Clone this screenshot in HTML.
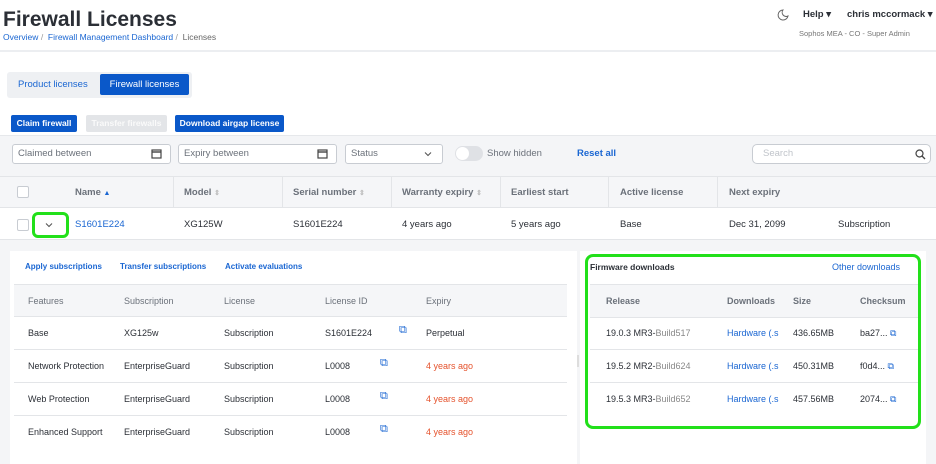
<!DOCTYPE html>
<html><head><style>
*{box-sizing:border-box;margin:0;padding:0}
body{width:936px;height:464px;overflow:hidden;background:#fff;font-family:"Liberation Sans",sans-serif;position:relative;color:#2b2f36}
.a{position:absolute;white-space:nowrap}
.blue{color:#1a66d2}
.btn{position:absolute;height:17px;border-radius:2px;background:#0a58c9;color:#fff;font-size:8.5px;font-weight:bold;text-align:center;line-height:17px}
.inp{position:absolute;top:144px;height:20px;background:#fff;border:1px solid #c8ccd2;border-radius:3px;font-size:9.5px;color:#6b717a;padding-left:5px;line-height:18px}
.th{font-size:9.5px;font-weight:bold;color:#6b717a}
.td{font-size:9.5px;color:#2b2f36}
.s{font-size:9px}
.cb{position:absolute;width:12px;height:12px;border:1px solid #c8ccd2;border-radius:2px;background:#fff}
.td.red{color:#e5532d}
.td.lk{color:#1a66d2}
</style></head><body>
<div class="a" style="left:3px;top:8px;font-size:21px;font-weight:bold;color:#2b2f36">Firewall Licenses</div>
<div class="a" style="left:3px;top:32px;font-size:8.5px"><span class="blue">Overview</span> <span style="color:#999">/</span>&nbsp; <span class="blue">Firewall Management Dashboard</span> <span style="color:#999">/</span>&nbsp; <span style="color:#666">Licenses</span></div>
<svg class="a" style="left:777px;top:9px" width="12" height="12" viewBox="0 0 12 12"><path d="M6 1A5 5 0 1 0 11 7 4 4 0 0 1 6 1z" fill="none" stroke="#666" stroke-width="1"/></svg>
<div class="a" style="left:803px;top:9px;font-size:9.5px;font-weight:bold">Help ▾</div>
<div class="a" style="left:847px;top:9px;font-size:9.5px;font-weight:bold">chris mccormack ▾</div>
<div class="a" style="left:799px;top:29px;font-size:7.5px;color:#777">Sophos MEA - CO - Super Admin</div>
<div class="a" style="left:0;top:50px;width:936px;height:2px;background:#eceef1"></div>
<div class="a" style="left:7px;top:72px;width:185px;height:26px;background:#eef0f3;border-radius:3px"></div>
<div class="a blue" style="left:18px;top:79px;font-size:9.5px">Product licenses</div>
<div class="a" style="left:100px;top:74px;width:89px;height:21px;background:#0a58c9;border-radius:2px;color:#fff;font-size:9.5px;text-align:center;line-height:21px">Firewall licenses</div>
<div class="btn" style="left:11px;top:115px;width:66px">Claim firewall</div>
<div class="btn" style="left:86px;top:115px;width:81px;background:#e3e5e8;color:#fafafa">Transfer firewalls</div>
<div class="btn" style="left:175px;top:115px;width:109px">Download airgap license</div>
<div class="a" style="left:0;top:135px;width:936px;height:329px;background:#f4f5f7;border-top:1px solid #e6e8eb"></div>
<div class="inp" style="left:12px;width:159px">Claimed between</div>
<div class="inp" style="left:178px;width:159px">Expiry between</div>
<svg class="a" style="left:151px;top:148px" width="11" height="11"><rect x="1" y="2" width="9" height="8" fill="none" stroke="#444" stroke-width="1.2"/><line x1="1" y1="4" x2="10" y2="4" stroke="#444" stroke-width="1.4"/></svg>
<svg class="a" style="left:317px;top:148px" width="11" height="11"><rect x="1" y="2" width="9" height="8" fill="none" stroke="#444" stroke-width="1.2"/><line x1="1" y1="4" x2="10" y2="4" stroke="#444" stroke-width="1.4"/></svg>
<div class="inp" style="left:345px;width:98px">Status</div>
<svg class="a" style="left:424px;top:151px" width="8" height="6"><path d="M1 1.5L4 4.5 7 1.5" fill="none" stroke="#555" stroke-width="1.1"/></svg>
<div class="a" style="left:455px;top:146px;width:28px;height:15px;border-radius:8px;background:#dfe1e5"></div>
<div class="a" style="left:456px;top:147px;width:13px;height:13px;border-radius:7px;background:#fff"></div>
<div class="a" style="left:487px;top:148px;font-size:9.5px;color:#6b717a">Show hidden</div>
<div class="a blue" style="left:577px;top:148px;font-size:9.5px;font-weight:bold">Reset all</div>
<div class="inp" style="left:752px;width:179px;border-radius:5px;color:#c0c4ca;padding-left:10px">Search<svg style="position:absolute;right:4px;top:4px" width="11" height="11"><circle cx="4.5" cy="4.5" r="3.5" fill="none" stroke="#444" stroke-width="1.2"/><line x1="7" y1="7" x2="10" y2="10" stroke="#444" stroke-width="1.3"/></svg></div>
<div class="a" style="left:0;top:176px;width:936px;height:32px;background:#f5f6f8;border-top:1px solid #e3e5e8;border-bottom:1px solid #e3e5e8"></div>
<div class="a" style="left:0;top:208px;width:936px;height:32px;background:#fff;border-bottom:1px solid #e3e5e8"></div>
<div class="a" style="left:173px;top:177px;width:1px;height:30px;background:#e3e5e8"></div>
<div class="a" style="left:282px;top:177px;width:1px;height:30px;background:#e3e5e8"></div>
<div class="a" style="left:391px;top:177px;width:1px;height:30px;background:#e3e5e8"></div>
<div class="a" style="left:500px;top:177px;width:1px;height:30px;background:#e3e5e8"></div>
<div class="a" style="left:608px;top:177px;width:1px;height:30px;background:#e3e5e8"></div>
<div class="a" style="left:717px;top:177px;width:1px;height:30px;background:#e3e5e8"></div>
<div class="cb" style="left:17px;top:186px"></div>
<div class="a th" style="left:75px;top:187px">Name <span style="color:#1a66d2;font-size:7px">▲</span></div>
<div class="a th" style="left:184px;top:187px">Model <span style="color:#bbb;font-size:7px">⇕</span></div>
<div class="a th" style="left:293px;top:187px">Serial number <span style="color:#bbb;font-size:7px">⇕</span></div>
<div class="a th" style="left:402px;top:187px">Warranty expiry <span style="color:#bbb;font-size:7px">⇕</span></div>
<div class="a th" style="left:511px;top:187px">Earliest start</div>
<div class="a th" style="left:620px;top:187px">Active license</div>
<div class="a th" style="left:729px;top:187px">Next expiry</div>
<div class="cb" style="left:17px;top:219px"></div>
<div class="a" style="left:32px;top:212px;width:37px;height:26px;border:3px solid #22e01a;border-radius:6px"></div>
<svg class="a" style="left:45px;top:222px" width="8" height="6"><path d="M1 1.5L4 4.5 7 1.5" fill="none" stroke="#555" stroke-width="1.1"/></svg>
<div class="a td lk" style="left:75px;top:219px">S1601E224</div>
<div class="a td" style="left:184px;top:219px">XG125W</div>
<div class="a td" style="left:293px;top:219px">S1601E224</div>
<div class="a td" style="left:402px;top:219px">4 years ago</div>
<div class="a td" style="left:511px;top:219px">5 years ago</div>
<div class="a td" style="left:620px;top:219px">Base</div>
<div class="a td" style="left:729px;top:219px">Dec 31, 2099</div>
<div class="a td" style="left:838px;top:219px">Subscription</div>

<div class="a" style="left:10px;top:251px;width:567px;height:213px;background:#fff"></div>
<div class="a blue" style="left:25px;top:262px;font-size:8px;font-weight:bold">Apply subscriptions</div>
<div class="a blue" style="left:120px;top:262px;font-size:8px;font-weight:bold">Transfer subscriptions</div>
<div class="a blue" style="left:225px;top:262px;font-size:8px;font-weight:bold">Activate evaluations</div>
<div class="a" style="left:14px;top:284px;width:553px;height:33px;background:#f5f6f8;border-top:1px solid #e3e5e8;border-bottom:1px solid #e3e5e8"></div>
<div class="a th s" style="left:28px;top:296px;font-weight:normal">Features</div>
<div class="a th s" style="left:124px;top:296px;font-weight:normal">Subscription</div>
<div class="a th s" style="left:224px;top:296px;font-weight:normal">License</div>
<div class="a th s" style="left:325px;top:296px;font-weight:normal">License ID</div>
<div class="a th s" style="left:426px;top:296px;font-weight:normal">Expiry</div>
<div class="a" style="left:14px;top:349px;width:553px;height:1px;background:#e3e5e8"></div>
<div class="a" style="left:14px;top:382px;width:553px;height:1px;background:#e3e5e8"></div>
<div class="a" style="left:14px;top:415px;width:553px;height:1px;background:#e3e5e8"></div>
<div class="a" style="left:577px;top:355px;width:2px;height:12px;background:#ddd"></div>

<div class="a td s" style="left:28px;top:328px">Base</div><div class="a td s" style="left:124px;top:328px">XG125w</div><div class="a td s" style="left:224px;top:328px">Subscription</div><div class="a td s" style="left:325px;top:328px">S1601E224</div><div class="a blue" style="left:399px;top:324px;font-size:11px">⧉</div><div class="a td s" style="left:426px;top:328px">Perpetual</div>
<div class="a td s" style="left:28px;top:361px">Network Protection</div><div class="a td s" style="left:124px;top:361px">EnterpriseGuard</div><div class="a td s" style="left:224px;top:361px">Subscription</div><div class="a td s" style="left:325px;top:361px">L0008</div><div class="a blue" style="left:380px;top:357px;font-size:11px">⧉</div><div class="a td s red" style="left:426px;top:361px">4 years ago</div>
<div class="a td s" style="left:28px;top:394px">Web Protection</div><div class="a td s" style="left:124px;top:394px">EnterpriseGuard</div><div class="a td s" style="left:224px;top:394px">Subscription</div><div class="a td s" style="left:325px;top:394px">L0008</div><div class="a blue" style="left:380px;top:390px;font-size:11px">⧉</div><div class="a td s red" style="left:426px;top:394px">4 years ago</div>
<div class="a td s" style="left:28px;top:427px">Enhanced Support</div><div class="a td s" style="left:124px;top:427px">EnterpriseGuard</div><div class="a td s" style="left:224px;top:427px">Subscription</div><div class="a td s" style="left:325px;top:427px">L0008</div><div class="a blue" style="left:380px;top:423px;font-size:11px">⧉</div><div class="a td s red" style="left:426px;top:427px">4 years ago</div>

<div class="a" style="left:580px;top:251px;width:346px;height:213px;background:#fff"></div>
<div class="a" style="left:585px;top:254px;width:336px;height:175px;border:3px solid #22e01a;border-radius:8px"></div>
<div class="a" style="left:590px;top:262px;font-size:8.5px;font-weight:bold">Firmware downloads</div>
<div class="a blue" style="left:832px;top:262px;font-size:9px">Other downloads</div>
<div class="a" style="left:590px;top:284px;width:328px;height:34px;background:#f5f6f8;border-top:1px solid #e3e5e8;border-bottom:1px solid #e3e5e8"></div>
<div class="a th s" style="left:606px;top:296px">Release</div>
<div class="a th s" style="left:727px;top:296px">Downloads</div>
<div class="a th s" style="left:793px;top:296px">Size</div>
<div class="a th s" style="left:860px;top:296px">Checksum</div>
<div class="a" style="left:590px;top:349px;width:328px;height:1px;background:#e3e5e8"></div>
<div class="a" style="left:590px;top:382px;width:328px;height:1px;background:#e3e5e8"></div>
<div class="a td s" style="left:606px;top:328px">19.0.3 MR3-<span style="color:#888">Build517</span></div><div class="a td s lk" style="left:727px;top:328px">Hardware (.s</div><div class="a td s" style="left:793px;top:328px">436.65MB</div><div class="a td s" style="left:860px;top:328px">ba27... <span class="blue">⧉</span></div>
<div class="a td s" style="left:606px;top:361px">19.5.2 MR2-<span style="color:#888">Build624</span></div><div class="a td s lk" style="left:727px;top:361px">Hardware (.s</div><div class="a td s" style="left:793px;top:361px">450.31MB</div><div class="a td s" style="left:860px;top:361px">f0d4... <span class="blue">⧉</span></div>
<div class="a td s" style="left:606px;top:394px">19.5.3 MR3-<span style="color:#888">Build652</span></div><div class="a td s lk" style="left:727px;top:394px">Hardware (.s</div><div class="a td s" style="left:793px;top:394px">457.56MB</div><div class="a td s" style="left:860px;top:394px">2074... <span class="blue">⧉</span></div>
</body></html>
